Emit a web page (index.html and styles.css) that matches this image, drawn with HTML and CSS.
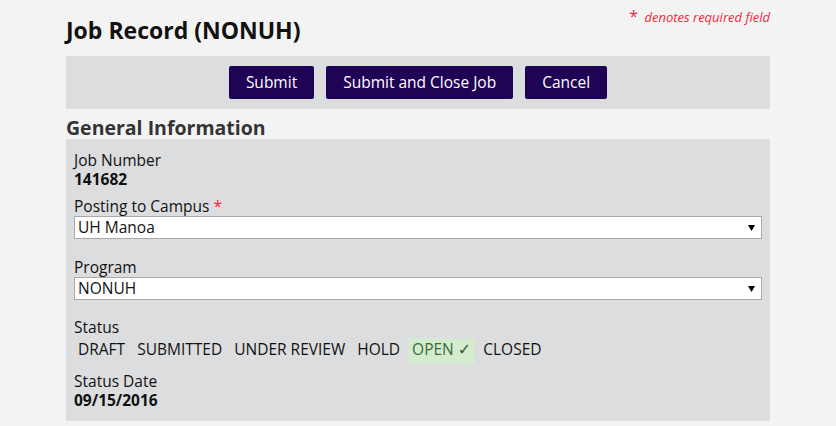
FILE: index.html
```html
<!DOCTYPE html>
<html lang="en">
<head>
<meta charset="utf-8">
<title>Job Record (NONUH)</title>
<link rel="stylesheet" href="styles.css">
</head>
<body>
<div class="page">
  <header class="head">
    <h1 class="title">Job Record (NONUH)</h1>
    <p class="req"><span class="req-star">*</span> denotes required field</p>
  </header>

  <div class="actions">
    <button class="btn" type="button">Submit</button>
    <button class="btn" type="button">Submit and Close Job</button>
    <button class="btn" type="button">Cancel</button>
  </div>

  <h2 class="section-title">General Information</h2>

  <div class="panel">
    <div class="field">
      <div class="label">Job Number</div>
      <div class="value">141682</div>
    </div>

    <div class="field field-select">
      <div class="label">Posting to Campus <span class="star">*</span></div>
      <div class="select">
        <span class="select-text">UH Manoa</span>
        <svg class="select-arrow" width="7" height="6" viewBox="0 0 7 6"><polygon points="0,0 7,0 3.5,6" fill="#000"/></svg>
      </div>
    </div>

    <div class="field field-select2">
      <div class="label">Program</div>
      <div class="select">
        <span class="select-text">NONUH</span>
        <svg class="select-arrow" width="7" height="6" viewBox="0 0 7 6"><polygon points="0,0 7,0 3.5,6" fill="#000"/></svg>
      </div>
    </div>

    <div class="field">
      <div class="label">Status</div>
      <div class="statuses">
        <span class="status">DRAFT</span>
        <span class="status">SUBMITTED</span>
        <span class="status">UNDER REVIEW</span>
        <span class="status">HOLD</span>
        <span class="status status-on">OPEN <span class="check">✓</span></span>
        <span class="status">CLOSED</span>
      </div>
    </div>

    <div class="field field-last">
      <div class="label">Status Date</div>
      <div class="value">09/15/2016</div>
    </div>
  </div>
</div>
</body>
</html>
```

FILE: styles.css
```css
html, body {
  margin: 0;
  padding: 0;
}

body {
  background: #f3f3f3;
  font-family: "Open Sans", "Noto Sans", sans-serif;
  color: #111;
}

.page {
  width: 704px;
  margin: 0 auto;
}

.head {
  display: flex;
  justify-content: space-between;
  align-items: flex-start;
  height: 56px;
}

.title {
  margin: 0;
  padding-top: 15px;
  font-size: 23px;
  line-height: 30px;
  font-weight: 700;
  color: #111;
}

.req {
  margin: 0;
  padding-top: 6px;
  font-size: 13px;
  line-height: 20px;
  font-style: italic;
  color: #f0283c;
}

.req-star {
  font-style: normal;
  font-size: 16px;
  margin-right: 3px;
}

.actions {
  background: #dcdddf;
  padding: 10px 0;
  display: flex;
  justify-content: center;
  gap: 12px;
}

.btn {
  font-family: "Open Sans", "Noto Sans", sans-serif;
  font-size: 15.5px;
  line-height: 33px;
  height: 33px;
  padding: 0 17px;
  border: none;
  border-radius: 2px;
  background: #1f0355;
  color: #fff;
}

.section-title {
  margin: 0;
  padding-top: 7px;
  font-size: 19.5px;
  line-height: 23px;
  font-weight: 700;
  color: #333;
}

.panel {
  background: #dcdddf;
  padding: 12px 8px 11px;
  font-size: 15.5px;
  line-height: 19px;
}

.field {
  margin-bottom: 8px;
}

.field-select {
  margin-bottom: 19px;
}

.field-select2 {
  margin-bottom: 18px;
}

.field-last {
  margin-bottom: 0;
}

.label {
  color: #111;
}

.star {
  color: #f0283c;
}

.value {
  font-weight: 700;
}

.select {
  display: flex;
  align-items: center;
  justify-content: space-between;
  height: 21px;
  border: 1px solid #a9a9a9;
  background: #fff;
  padding: 0 6px 0 3px;
  line-height: 21px;
}

.select-arrow {
  display: block;
}

.statuses {
  display: flex;
  gap: 4px;
  margin-top: 1px;
}

.status {
  padding: 2px 4px 5px;
}

.status-on {
  background: #d5ebd0;
  color: #3a6b3a;
}

.check {
  color: #2f5a2f;
  font-family: "DejaVu Sans", sans-serif;
  font-size: 16px;
}
```
